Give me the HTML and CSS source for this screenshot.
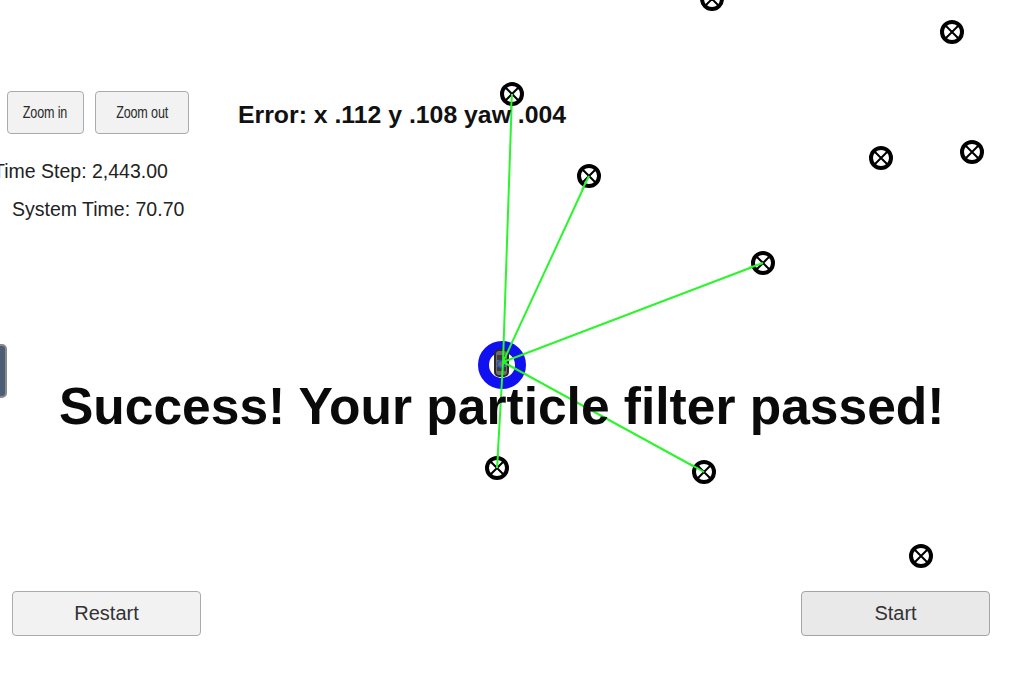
FILE: index.html
```html
<!DOCTYPE html>
<html>
<head>
<meta charset="utf-8">
<link rel="stylesheet" href="styles.css">
</head>
<body>
<div class="stage">
  <svg class="map" width="1009" height="674" viewBox="0 0 1009 674" xmlns="http://www.w3.org/2000/svg">
    <g class="car">
      <circle cx="502" cy="365" r="18.5" fill="none" stroke="#1010f0" stroke-width="11"/>
      <rect x="495" y="350" width="13" height="26" rx="4" fill="#6e6e6e" stroke="#2a2a2a" stroke-width="2"/>
      <rect x="497" y="355" width="9" height="5" fill="#3a3a3a"/>
      <rect x="497" y="367" width="9" height="4" fill="#3a3a3a"/>
      <circle cx="501" cy="364" r="3.5" fill="none" stroke="#2050d0" stroke-width="1.5"/>
    </g>
    <g class="rays" stroke="#2bf52b" stroke-width="2" fill="none">
      <line x1="503" y1="362" x2="512" y2="94"/>
      <line x1="503" y1="362" x2="589" y2="176"/>
      <line x1="503" y1="362" x2="763" y2="263"/>
      <line x1="503" y1="362" x2="704" y2="472"/>
      <line x1="503" y1="362" x2="497" y2="468"/>
    </g>
    <g fill="#fff" stroke="#000">
      <g transform="translate(712,-1)"><circle r="10" stroke-width="4"/><path d="M-6-6L6 6M6-6L-6 6" stroke-width="2"/></g>
      <g transform="translate(952,32)"><circle r="10" stroke-width="4"/><path d="M-6-6L6 6M6-6L-6 6" stroke-width="2"/></g>
      <g transform="translate(512,94)"><circle r="10" stroke-width="4"/><path d="M-6-6L6 6M6-6L-6 6" stroke-width="2"/></g>
      <g transform="translate(589,176)"><circle r="10" stroke-width="4"/><path d="M-6-6L6 6M6-6L-6 6" stroke-width="2"/></g>
      <g transform="translate(881,158)"><circle r="10" stroke-width="4"/><path d="M-6-6L6 6M6-6L-6 6" stroke-width="2"/></g>
      <g transform="translate(972,152)"><circle r="10" stroke-width="4"/><path d="M-6-6L6 6M6-6L-6 6" stroke-width="2"/></g>
      <g transform="translate(763,263)"><circle r="10" stroke-width="4"/><path d="M-6-6L6 6M6-6L-6 6" stroke-width="2"/></g>
      <g transform="translate(497,468)"><circle r="10" stroke-width="4"/><path d="M-6-6L6 6M6-6L-6 6" stroke-width="2"/></g>
      <g transform="translate(704,472)"><circle r="10" stroke-width="4"/><path d="M-6-6L6 6M6-6L-6 6" stroke-width="2"/></g>
      <g transform="translate(921,556)"><circle r="10" stroke-width="4"/><path d="M-6-6L6 6M6-6L-6 6" stroke-width="2"/></g>
    </g>
    <g stroke="#2bf52b" stroke-width="2">
      <line x1="512" y1="94" x2="511" y2="110"/>
      <line x1="589" y1="176" x2="582" y2="190"/>
      <line x1="763" y1="263" x2="749" y2="268"/>
      <line x1="704" y1="472" x2="690" y2="464"/>
      <line x1="497" y1="468" x2="498" y2="454"/>
    </g>
  </svg>

  <div class="side-tab"></div>

  <div class="ui">
    <div class="top-row">
      <button class="btn small"><span class="narrow">Zoom in</span></button>
      <button class="btn small wide"><span class="narrow">Zoom out</span></button>
      <div class="error">Error: x .112 y .108 yaw .004</div>
    </div>
    <div class="stat step">Time Step: 2,443.00</div>
    <div class="stat sys">System Time: 70.70</div>
    <div class="success">Success! Your particle filter passed!</div>
    <div class="bottom-row">
      <button class="btn big">Restart</button>
      <button class="btn big start">Start</button>
    </div>
  </div>
</div>
</body>
</html>
```

FILE: styles.css
```css
html, body {
  margin: 0;
  padding: 0;
  background: #fff;
  overflow: hidden;
}
.stage {
  position: relative;
  width: 1009px;
  height: 674px;
  font-family: "Liberation Sans", Arial, sans-serif;
}
.map {
  position: absolute;
  left: 0;
  top: 0;
}
.side-tab {
  position: absolute;
  left: -8px;
  top: 344px;
  width: 11px;
  height: 50px;
  background: #4d5d76;
  border: 2px solid #8a8a8a;
  border-radius: 5px;
}
.ui {
  position: relative;
  display: flex;
  flex-direction: column;
  height: 674px;
  box-sizing: border-box;
  padding-top: 91px;
}
.top-row {
  display: flex;
  align-items: center;
  padding-left: 7px;
  gap: 11px;
}
.btn {
  box-sizing: border-box;
  background: #f2f2f2;
  border: 1px solid #ababab;
  border-radius: 4px;
  color: #333;
  padding: 0;
  margin: 0;
}
.btn.small {
  width: 77px;
  height: 43px;
  font-family: "Liberation Sans", sans-serif;
  font-size: 17px;
  color: #2a2a2a;
}
.narrow {
  display: inline-block;
  transform: scaleX(0.74);
  letter-spacing: -0.2px;
  white-space: nowrap;
}
.btn.small.wide {
  width: 94px;
}
.error {
  margin-left: 38px;
  margin-top: 5px;
  font-weight: bold;
  font-size: 24.8px;
  color: #111;
  white-space: nowrap;
}
.stat {
  font-size: 19.5px;
  color: #222;
  white-space: nowrap;
  line-height: 24px;
}
.stat.step {
  margin-top: 25px;
  margin-left: -7px;
}
.stat.sys {
  margin-top: 14px;
  margin-left: 12px;
}
.success {
  margin-top: 155px;
  margin-left: 59px;
  font-weight: bold;
  font-size: 51.5px;
  line-height: 60px;
  color: #0a0a0a;
  white-space: nowrap;
}
.bottom-row {
  display: flex;
  justify-content: space-between;
  margin-top: auto;
  margin-bottom: 38px;
  padding: 0 19px 0 12px;
}
.btn.big {
  width: 189px;
  height: 45px;
  font-family: "Liberation Sans", Arial, sans-serif;
  font-size: 20px;
}
.btn.start {
  background: #e9e9e9;
  border-color: #a4a4a4;
}
```
